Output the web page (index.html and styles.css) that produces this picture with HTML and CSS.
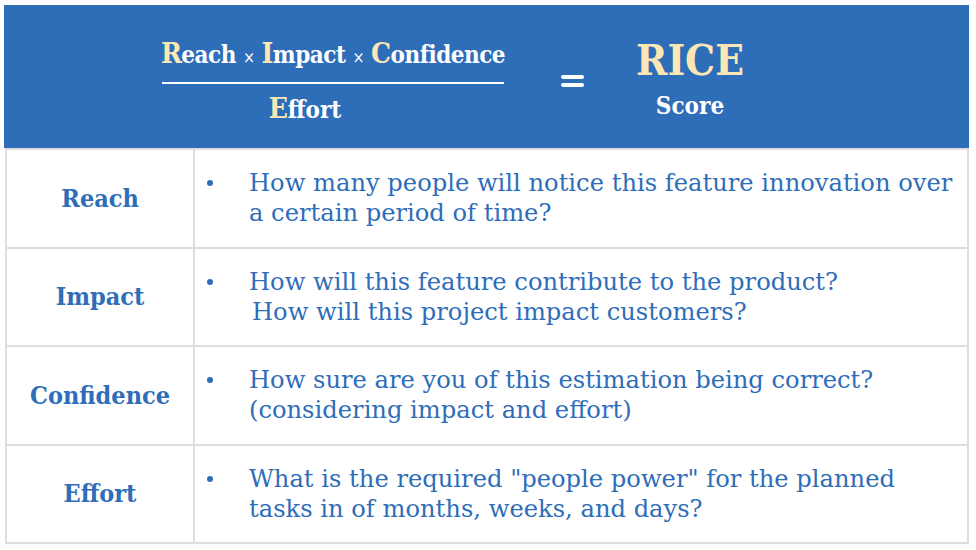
FILE: index.html
```html
<!DOCTYPE html>
<html>
<head>
<meta charset="utf-8">
<link rel="stylesheet" href="styles.css">
</head>
<body>
<div class="page">
  <div class="header">
    <div class="fraction">
      <div class="numer"><span class="hl">R</span>each <span class="times">×</span> <span class="hl">I</span>mpact <span class="times">×</span> <span class="hl">C</span>onfidence</div>
      <div class="bar"></div>
      <div class="denom"><span class="hl">E</span>ffort</div>
    </div>
    <div class="equals"><span></span><span></span></div>
    <div class="result">
      <div class="rice">RICE</div>
      <div class="score">Score</div>
    </div>
  </div>
  <div class="table">
    <div class="label">Reach</div>
    <div class="desc"><span class="dot"></span><div class="txt">How many people will notice this feature innovation over<br>a certain period of time?</div></div>
    <div class="label">Impact</div>
    <div class="desc"><span class="dot"></span><div class="txt">How will this feature contribute to the product?<br><span class="indent">How will this project impact customers?</span></div></div>
    <div class="label">Confidence</div>
    <div class="desc"><span class="dot"></span><div class="txt">How sure are you of this estimation being correct?<br>(considering impact and effort)</div></div>
    <div class="label">Effort</div>
    <div class="desc"><span class="dot"></span><div class="txt">What is the required "people power" for the planned<br>tasks in of months, weeks, and days?</div></div>
  </div>
</div>
</body>
</html>
```
FILE: styles.css
```css
html, body { margin: 0; padding: 0; background: #fff; }
body { font-family: "DejaVu Serif", "Liberation Serif", serif; color: #2E6DB8; }
.page { padding: 5px 7px 0 4px; width: 965px; }
.header {
  height: 143px; background: #2E6DB8; display: flex; align-items: center;
  padding-left: 156px; box-sizing: border-box;
}
.fraction { width: 346px; display: flex; flex-direction: column; align-items: center; color: #fff; font-weight: bold; margin-top: 11px; }
.numer { font-size: 24px; line-height: 30px; letter-spacing: -0.5px; font-stretch: condensed; white-space: nowrap; }
.times { font-size: 16px; font-weight: normal; }
.hl { color: #FCE6B3; font-size: 28px; }
.bar { width: 342px; height: 2px; background: #fff; margin: 9px 0 10px; }
.denom { font-size: 24px; line-height: 30px; font-stretch: condensed; padding-right: 56px; }
.equals { margin-left: 55px; margin-top: 8px; display: flex; flex-direction: column; gap: 4px; }
.equals span { display: block; width: 23px; height: 4px; border-radius: 2px; background: #fff; }
.result { margin-left: 54px; display: flex; flex-direction: column; align-items: center; width: 104px; margin-top: 2px; }
.rice { color: #FCE6B3; font-size: 42px; line-height: 50px; font-weight: bold; font-stretch: condensed; }
.score { color: #fff; font-size: 24px; line-height: 28px; font-weight: bold; font-stretch: condensed; margin-top: 6px; }
.table {
  margin-left: 1px; display: grid; grid-template-columns: 188px 1fr; grid-auto-rows: 98.5px;
  border-left: 2px solid #DEDEDE; border-right: 2px solid #DEDEDE; border-bottom: 2px solid #DEDEDE;
  width: 964px; box-sizing: border-box;
}
.label {
  display: flex; align-items: center; justify-content: center;
  font-weight: bold; font-size: 25px; border-right: 2px solid #DEDEDE; border-top: 2px solid #DEDEDE;
  font-stretch: condensed;
}
.desc { display: flex; align-items: flex-start; padding-top: 18px; box-sizing: border-box; border-top: 2px solid #DEDEDE; font-size: 24.2px; line-height: 30px; }
.dot { width: 6px; height: 6px; border-radius: 50%; background: #2E6DB8; margin: 12px 36px 0 12px; flex: none; }
.txt { white-space: nowrap; }
.indent { padding-left: 3px; }
```
